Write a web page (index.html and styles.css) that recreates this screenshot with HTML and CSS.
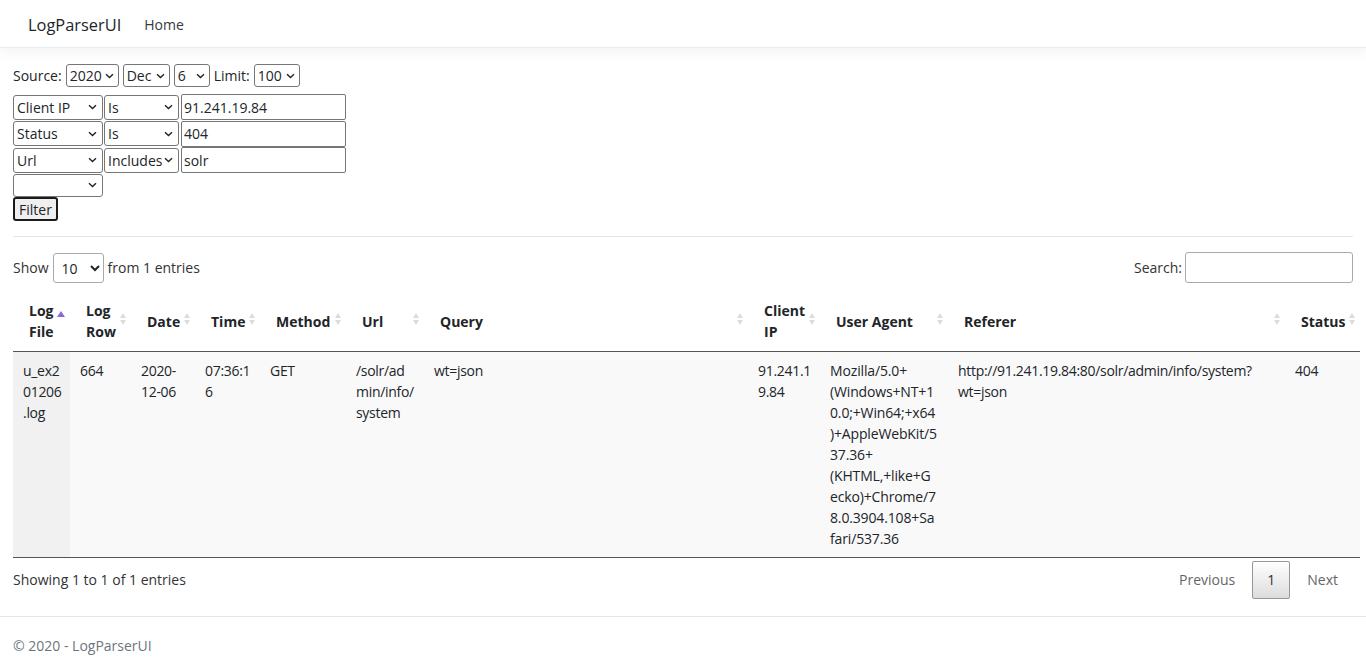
FILE: index.html
```html
<!DOCTYPE html>
<html lang="en">
<head>
<meta charset="utf-8">
<title>LogParserUI</title>
<link rel="stylesheet" href="styles.css">
</head>
<body>
<header class="site-header">
  <nav class="navbar">
    <a class="brand" href="#">LogParserUI</a>
    <a class="nav-link" href="#">Home</a>
  </nav>
</header>

<main class="page">
  <form class="filters">
    <div class="source-row">
      <span>Source:</span>
      <select class="sel s-year"><option>2020</option></select>
      <select class="sel s-month"><option>Dec</option></select>
      <select class="sel s-day"><option>6</option><option>16</option></select>
      <span>Limit:</span>
      <select class="sel s-limit"><option>100</option></select>
    </div>
    <div class="filter-row">
      <select class="sel field"><option>Client IP</option></select>
      <select class="sel op"><option>Is</option><option>Includes</option></select>
      <input class="val" type="text" value="91.241.19.84">
    </div>
    <div class="filter-row">
      <select class="sel field"><option>Status</option></select>
      <select class="sel op"><option>Is</option><option>Includes</option></select>
      <input class="val" type="text" value="404">
    </div>
    <div class="filter-row">
      <select class="sel field"><option>Url</option></select>
      <select class="sel op"><option>Includes</option></select>
      <input class="val" type="text" value="solr">
    </div>
    <div class="filter-row short">
      <select class="sel field"><option></option><option>Client IP</option></select>
    </div>
    <button class="filter-btn" type="button">Filter</button>
  </form>

  <hr class="divider">

  <section class="dt-wrapper">
    <div class="dt-top">
      <label class="dt-length">Show
        <select class="dt-select"><option>10</option><option>25</option></select>
        from 1 entries</label>
      <label class="dt-filter">Search:<input class="dt-search" type="search"></label>
    </div>

    <table class="dt-table">
      <colgroup>
        <col class="c-file"><col class="c-row"><col class="c-date"><col class="c-time">
        <col class="c-method"><col class="c-url"><col class="c-query"><col class="c-ip">
        <col class="c-ua"><col class="c-ref"><col class="c-status">
      </colgroup>
      <thead>
        <tr>
          <th class="sort asc">Log File</th>
          <th class="sort">Log Row</th>
          <th class="sort">Date</th>
          <th class="sort">Time</th>
          <th class="sort">Method</th>
          <th class="sort">Url</th>
          <th class="sort">Query</th>
          <th class="sort">Client IP</th>
          <th class="sort">User Agent</th>
          <th class="sort">Referer</th>
          <th class="sort">Status</th>
        </tr>
      </thead>
      <tbody>
        <tr class="odd">
          <td class="sorted t-tight">u_ex201206.log</td>
          <td>664</td>
          <td>2020-12-06</td>
          <td class="t-tight">07:36:16</td>
          <td>GET</td>
          <td>/solr/admin/info/system</td>
          <td>wt=json</td>
          <td class="t-tight">91.241.19.84</td>
          <td class="t-ua">Mozilla/5.0+ (Windows+NT+10.0;+Win64;+x64)+AppleWebKit/537.36+ (KHTML,+like+Gecko)+Chrome/78.0.3904.108+Safari/537.36</td>
          <td>http://91.241.19.84:80/solr/admin/info/system?wt=json</td>
          <td>404</td>
        </tr>
      </tbody>
    </table>

    <div class="dt-bottom">
      <div class="dt-info">Showing 1 to 1 of 1 entries</div>
      <div class="dt-paginate">
        <a class="pg-btn disabled">Previous</a>
        <a class="pg-btn current">1</a>
        <a class="pg-btn disabled">Next</a>
      </div>
    </div>
  </section>
</main>

<footer class="site-footer">
  <div class="footer-inner">&copy; 2020 - LogParserUI</div>
</footer>
</body>
</html>
```

FILE: styles.css
```css
* { box-sizing: border-box; }

html, body {
  margin: 0;
  padding: 0;
}

body {
  font-family: "Open Sans", "Noto Sans", "Liberation Sans", sans-serif;
  font-size: 14px;
  line-height: 21px;
  color: #212529;
  background: #fff;
  overflow: hidden;
}

a { text-decoration: none; color: inherit; }

input, button, select {
  margin: 0;
  font-family: inherit;
  font-size: inherit;
  line-height: inherit;
  color: #212529;
}

/* Navbar */
.site-header {
  background: #fff;
  border-bottom: 1px solid #e9ecef;
  box-shadow: 0 4px 12px rgba(0, 0, 0, 0.05);
  position: relative;
  z-index: 1;
}

.navbar {
  height: 47px;
  display: flex;
  align-items: center;
  padding: 2px 28px 0;
}

.brand {
  font-size: 16.4px;
  color: #212529;
  margin-right: 23px;
}

.nav-link {
  color: #343a40;
  font-size: 14px;
}

/* Page */
.page {
  padding: 16px 13px 0;
}

.source-row {
  display: flex;
  align-items: center;
  gap: 4px;
  height: 23px;
  margin-bottom: 7px;
}

.sel {
  -webkit-appearance: none;
  appearance: none;
  height: 23px;
  border: 1px solid #767676;
  border-radius: 3px;
  background-color: #fff;
  background-image: url("data:image/svg+xml,%3Csvg xmlns='http://www.w3.org/2000/svg' width='9' height='6' viewBox='0 0 9 6'%3E%3Cpath d='M1 1.2l3.5 3.3 3.5-3.3' fill='none' stroke='%23222' stroke-width='1.4'/%3E%3C/svg%3E");
  background-repeat: no-repeat;
  background-position: right 5px center;
  padding: 0 16px 0 3px;
}

.source-row .sel { padding: 0 14px 0 3px; background-position: right 4px center; }
.s-year { width: 53px; }
.s-month { width: 47px; }
.s-day { width: 36px; }
.s-limit { width: 46px; }

.filter-row {
  display: flex;
  align-items: center;
  gap: 1px;
  height: 26.5px;
}

.filter-row.short { height: 23.5px; align-items: flex-start; }

.field { width: 90px; height: 25px; }
.op { width: 75px; height: 25px; }
.filter-row.short .field { height: 23px; }

.val {
  width: 165px;
  height: 26px;
  border: 1px solid #767676;
  border-radius: 2px;
  padding: 1px 2px;
  margin-left: 1px;
}

.filter-btn {
  display: block;
  margin-top: 0;
  height: 24px;
  padding: 0 4px;
  border: 2px solid #1b1b1b;
  border-radius: 3px;
  background: #efefef;
}

.divider {
  margin: 15px 0 15px;
  border: 0;
  border-top: 1px solid rgba(0, 0, 0, 0.1);
}

/* DataTables-like */
.dt-top {
  display: flex;
  justify-content: space-between;
  align-items: center;
  height: 31px;
}

.dt-length {
  display: flex;
  align-items: center;
  color: #333;
}

.dt-select {
  width: 51px;
  height: 30px;
  margin: 0 4px;
  padding: 4px;
  border: 1px solid #aaa;
  border-radius: 3px;
  background: #fff;
}

.dt-filter {
  display: flex;
  align-items: center;
  color: #333;
}

.dt-search {
  width: 168px;
  height: 31px;
  margin-left: 3px;
  border: 1px solid #aaa;
  border-radius: 3px;
  padding: 5px;
  background: transparent;
}

.dt-table {
  margin-top: 8px;
  width: 1347px;
  table-layout: fixed;
  border-collapse: separate;
  border-spacing: 0;
}

.c-file { width: 57px; }
.c-row { width: 61px; }
.c-date { width: 64px; }
.c-time { width: 65px; }
.c-method { width: 86px; }
.c-url { width: 78px; }
.c-query { width: 324px; }
.c-ip { width: 72px; }
.c-ua { width: 128px; }
.c-ref { width: 337px; }
.c-status { width: 75px; }

.dt-table th {
  text-align: left;
  font-weight: 700;
  padding: 9px 18px 9px 16px;
  border-bottom: 1px solid #555;
  position: relative;
  vertical-align: middle;
}

.dt-table th.sort::before,
.dt-table th.sort::after {
  content: "";
  position: absolute;
  right: 5px;
  width: 0;
  height: 0;
  border-left: 3.5px solid transparent;
  border-right: 3.5px solid transparent;
}

.dt-table th.sort::before {
  top: calc(50% - 8px);
  border-bottom: 5px solid #dcdcdc;
}

.dt-table th.sort::after {
  top: calc(50% - 1px);
  border-top: 5px solid #dcdcdc;
}

.dt-table th.asc::before {
  top: calc(50% - 10px);
  right: 5px;
  border-left-width: 4px;
  border-right-width: 4px;
  border-bottom: 6px solid #8e68d8;
}

.dt-table th.asc::after { display: none; }

.dt-table td {
  padding: 8px 10px;
  vertical-align: top;
  overflow-wrap: anywhere;
  letter-spacing: -0.3px;
  border-bottom: 1px solid #555;
}

.dt-table td.t-tight { padding-right: 7px; }
.dt-table td.t-ua { letter-spacing: -0.15px; }

.dt-table tr.odd td { background: #f9f9f9; }
.dt-table tr.odd td.sorted { background: #f1f1f1; }

.dt-bottom {
  display: flex;
  justify-content: space-between;
  align-items: flex-start;
}

.dt-info {
  padding-top: 11px;
  color: #333;
}

.dt-paginate {
  display: flex;
  padding-top: 3px;
}

.pg-btn {
  padding: 7px 14px;
  margin-left: 2px;
  border: 1px solid transparent;
  border-radius: 2px;
  color: #666;
  line-height: 22px;
}

.pg-btn.current {
  color: #333;
  border: 1px solid #979797;
  background: linear-gradient(to bottom, #fff 0%, #dcdcdc 100%);
}

/* Footer */
.site-footer {
  margin-top: 17px;
  border-top: 1px solid #e5e5e5;
}

.footer-inner {
  line-height: 57px;
  padding-left: 13px;
  color: #6c757d;
}
```
